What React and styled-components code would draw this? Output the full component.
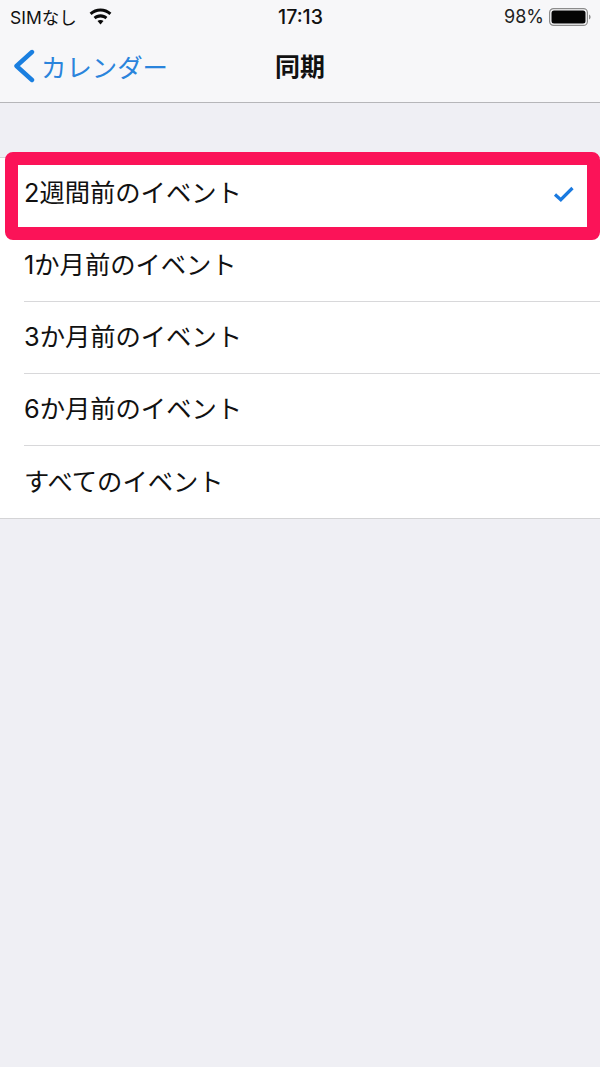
import React from 'react';
import styled, { createGlobalStyle } from 'styled-components';

const GlobalStyle = createGlobalStyle`
  html, body {
    margin: 0;
    padding: 0;
    background: #efeff4;
  }
  * {
    box-sizing: border-box;
  }
`;

const FONT = `"Inter", "Liberation Sans", "Noto Sans CJK JP", sans-serif`;

const Page = styled.div`
  width: 600px;
  height: 1067px;
  background: #efeff4;
  font-family: ${FONT};
  color: #000;
  overflow: hidden;
`;

const Header = styled.header`
  height: 103px;
  background: #f7f7f9;
  border-bottom: 1px solid #b6b6b9;
`;

const StatusBar = styled.div`
  height: 33px;
  padding: 0 9px 0 10px;
  display: grid;
  grid-template-columns: 1fr auto 1fr;
  align-items: center;
`;

const StatusLeft = styled.div`
  display: flex;
  align-items: center;
  gap: 12px;
  font-size: 17.5px;
  color: #111;
`;

const StatusTime = styled.div`
  font-size: 19.5px;
  font-weight: 500;
  color: #111;
`;

const StatusRight = styled.div`
  display: flex;
  justify-content: flex-end;
  align-items: center;
  gap: 5px;
  font-size: 18px;
  color: #222;
`;

const NavBar = styled.div`
  height: 69px;
  padding: 0 0 3px 14px;
  position: relative;
  display: flex;
  align-items: center;
`;

const BackLink = styled.div`
  display: flex;
  align-items: center;
  gap: 6px;
  font-size: 25.4px;
  color: #2a84dc;
`;

const NavTitle = styled.div`
  position: absolute;
  left: 0;
  right: 0;
  top: 17px;
  text-align: center;
  font-size: 25px;
  line-height: 34px;
  font-weight: 700;
  color: #111;
`;

const List = styled.ul`
  list-style: none;
  margin: 54px 0 0;
  padding: 0;
  position: relative;
  background: #fff;
  border-top: 1px solid #d4d4d6;
  border-bottom: 1px solid #d4d4d6;
`;

const Row = styled.li`
  height: 72px;
  margin-left: 24px;
  padding: 0 26px 0 1px;
  display: flex;
  align-items: center;
  justify-content: space-between;
  font-size: 25.3px;
  color: #111;
  border-bottom: ${(p) => (p.$last ? 'none' : '1px solid #d8d8da')};
`;

const RowLabel = styled.span`
  margin-bottom: 5px;
  margin-left: -1px;
`;

const Highlight = styled.div`
  position: absolute;
  left: 5px;
  right: 0;
  top: -6px;
  height: 88px;
  border: 13px solid #fb1358;
  border-radius: 8px;
  pointer-events: none;
`;

const WifiIcon = () => (
  <svg width="23" height="17" viewBox="0 0 23 17" fill="#0a0a0a">
    <path d="M11.5 0.5C7.4 0.5 3.6 2 0.6 4.7L2.6 7C5 4.8 8.1 3.6 11.5 3.6s6.5 1.2 8.9 3.4l2-2.3C19.4 2 15.6 0.5 11.5 0.5z" />
    <path d="M11.5 6.3c-2.6 0-5 1-6.9 2.6l2 2.3c1.3-1.1 3-1.8 4.9-1.8s3.6 0.7 4.9 1.8l2-2.3c-1.9-1.6-4.3-2.6-6.9-2.6z" />
    <path d="M11.5 12c-1.2 0-2.2 0.4-3 1.1l3 3.5 3-3.5c-0.8-0.7-1.8-1.1-3-1.1z" />
  </svg>
);

const BatteryIcon = () => (
  <svg width="42" height="18" viewBox="0 0 42 18">
    <rect x="0.6" y="0.6" width="37.8" height="16.8" rx="4" fill="none" stroke="#8c8c8c" strokeWidth="1.2" />
    <rect x="2.5" y="2.5" width="34" height="13" rx="2.5" fill="#050505" />
    <path d="M40 6.5c1 0.4 1.6 1.4 1.6 2.5s-0.6 2.1-1.6 2.5z" fill="#8c8c8c" />
  </svg>
);

const BackChevron = () => (
  <svg width="21" height="34" viewBox="0 0 21 34" fill="none">
    <path d="M18 3L2.5 17 18 31" stroke="#1a7fe0" strokeWidth="4.4" strokeLinecap="round" strokeLinejoin="round" />
  </svg>
);

const CheckIcon = () => (
  <svg width="21" height="16" viewBox="0 0 21 16" fill="none">
    <path d="M2 8.5l5.8 5.2L19.5 2" stroke="#1a7ae0" strokeWidth="3.2" />
  </svg>
);

const options = [
  '2週間前のイベント',
  '1か月前のイベント',
  '3か月前のイベント',
  '6か月前のイベント',
  'すべてのイベント',
];

const App = () => {
  return (
    <Page lang="ja">
      <GlobalStyle />
      <Header>
        <StatusBar>
          <StatusLeft>
            <span>SIMなし</span>
            <WifiIcon />
          </StatusLeft>
          <StatusTime>17:13</StatusTime>
          <StatusRight>
            <span>98%</span>
            <BatteryIcon />
          </StatusRight>
        </StatusBar>
        <NavBar>
          <BackLink>
            <BackChevron />
            <span>カレンダー</span>
          </BackLink>
          <NavTitle>同期</NavTitle>
        </NavBar>
      </Header>
      <List>
        {options.map((label, i) => (
          <Row key={label} $last={i === options.length - 1}>
            <RowLabel>{label}</RowLabel>
            {i === 0 && <CheckIcon />}
          </Row>
        ))}
        <Highlight />
      </List>
    </Page>
  );
};

export default App;
